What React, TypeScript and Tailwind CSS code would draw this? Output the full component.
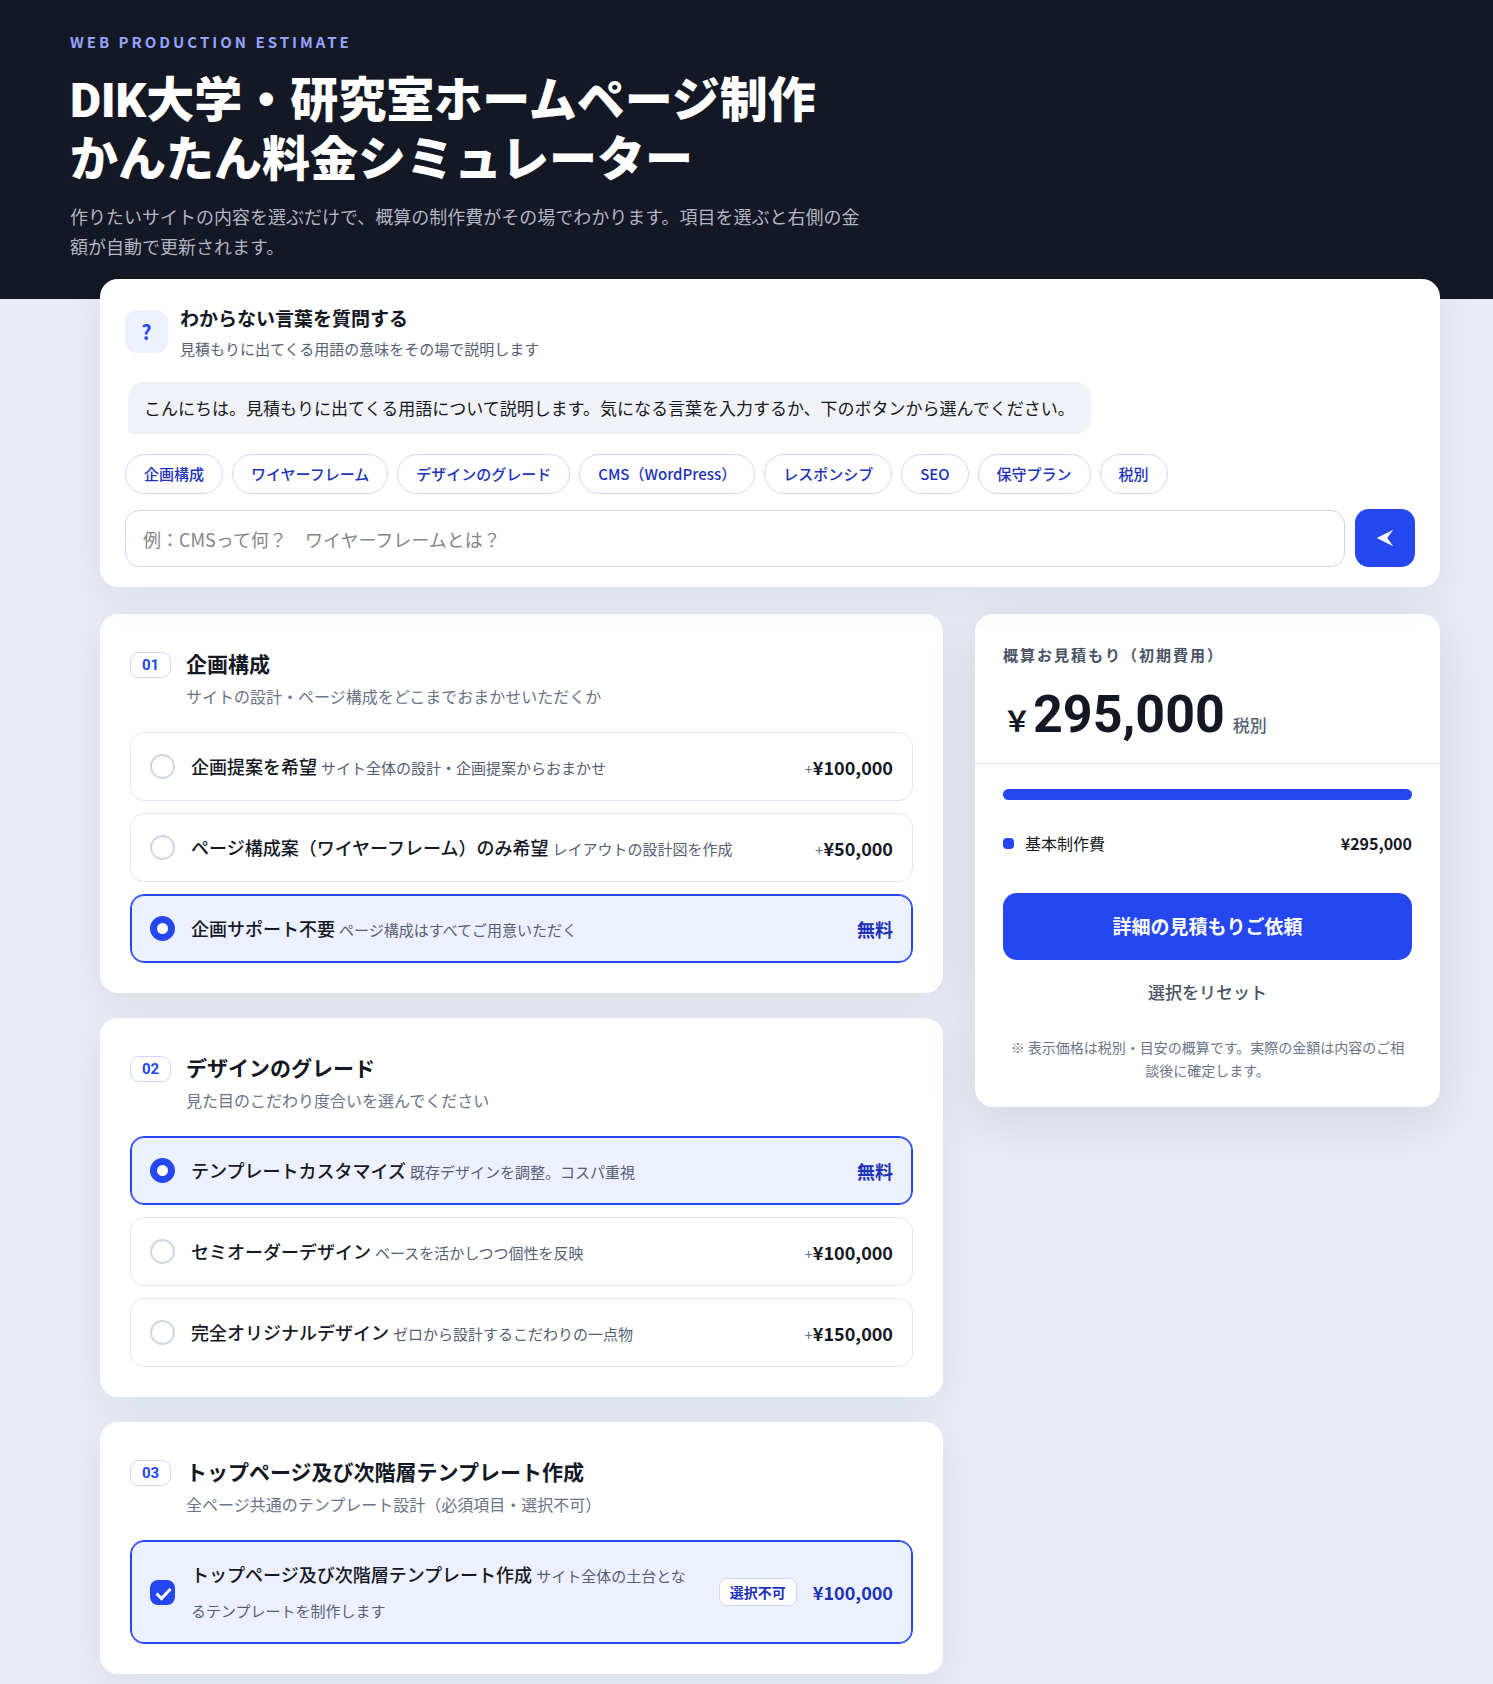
import React, { useState } from "react";

type Option = {
  id: string;
  label: string;
  desc: string;
  price: number;
};

type Section = {
  no: string;
  title: string;
  desc: string;
  options: Option[];
};

const BASE_PRICE = 295000;

const terms = [
  "企画構成",
  "ワイヤーフレーム",
  "デザインのグレード",
  "CMS（WordPress）",
  "レスポンシブ",
  "SEO",
  "保守プラン",
  "税別",
];

const sections: Section[] = [
  {
    no: "01",
    title: "企画構成",
    desc: "サイトの設計・ページ構成をどこまでおまかせいただくか",
    options: [
      { id: "plan-full", label: "企画提案を希望", desc: "サイト全体の設計・企画提案からおまかせ", price: 100000 },
      { id: "plan-wire", label: "ページ構成案（ワイヤーフレーム）のみ希望", desc: "レイアウトの設計図を作成", price: 50000 },
      { id: "plan-none", label: "企画サポート不要", desc: "ページ構成はすべてご用意いただく", price: 0 },
    ],
  },
  {
    no: "02",
    title: "デザインのグレード",
    desc: "見た目のこだわり度合いを選んでください",
    options: [
      { id: "design-template", label: "テンプレートカスタマイズ", desc: "既存デザインを調整。コスパ重視", price: 0 },
      { id: "design-semi", label: "セミオーダーデザイン", desc: "ベースを活かしつつ個性を反映", price: 100000 },
      { id: "design-full", label: "完全オリジナルデザイン", desc: "ゼロから設計するこだわりの一点物", price: 150000 },
    ],
  },
];

const defaults: Record<string, string> = { "01": "plan-none", "02": "design-template" };

const yen = (n: number) => "¥" + n.toLocaleString("en-US");

function SectionCard({ no, title, desc, children }: { no: string; title: string; desc: string; children: React.ReactNode }) {
  return (
    <section className="rounded-[18px] bg-white px-[30px] pt-[33px] pb-[30px] shadow-[0_10px_40px_rgba(20,24,36,0.07)]">
      <div className="mb-[22px] flex items-start gap-[15px]">
        <span className="mt-[5px] flex h-[26px] w-[41px] shrink-0 items-center justify-center rounded-[9px] border border-[#cdd5fd] font-['Roboto','Noto_Sans_CJK_JP',sans-serif] text-[15px] font-bold text-[#2447f0]">
          {no}
        </span>
        <div>
          <h2 className="text-[21px] leading-8 font-bold">{title}</h2>
          <p className="mt-[3px] text-base leading-7 text-[#6b7488]">{desc}</p>
        </div>
      </div>
      <div className="flex flex-col gap-3">{children}</div>
    </section>
  );
}

function OptionText({ label, desc }: { label: string; desc: string }) {
  return (
    <span className="flex-1 pr-1 text-lg leading-[35px] font-medium">
      {label} <small className="text-[15px] leading-none font-normal text-[#566073]">{desc}</small>
    </span>
  );
}

const rowBase = "flex cursor-pointer items-center gap-4 rounded-[14px] border px-[19px] py-4";
const rowOn = "border-[#2447f0] bg-[#edf0ff] shadow-[inset_0_0_0_1px_#2447f0]";
const rowOff = "border-[#e3e7f1] bg-white";

export default function App() {
  const [picked, setPicked] = useState(defaults);
  const [question, setQuestion] = useState("");

  const extras = sections
    .map((s) => s.options.find((o) => o.id === picked[s.no])!)
    .filter((o) => o.price > 0);
  const total = extras.reduce((sum, o) => sum + o.price, BASE_PRICE);

  return (
    <div className="min-h-screen bg-[#eaedf6] font-['Noto_Sans_CJK_JP',sans-serif] text-[#141824]">
      <header className="bg-[#141824] px-[70px] pt-[30px] pb-[38px]">
        <p className="text-[15px] leading-6 font-bold tracking-[3px] text-[#96a4ff]">WEB PRODUCTION ESTIMATE</p>
        <h1 className="mt-[17px] font-['Roboto','Noto_Sans_CJK_JP',sans-serif] text-5xl leading-[59px] font-black text-white">
          DIK大学・研究室ホームページ制作
          <br />
          かんたん料金シミュレーター
        </h1>
        <p className="mt-3 max-w-[800px] text-lg leading-[30px] text-[#b0b6c6]">
          作りたいサイトの内容を選ぶだけで、概算の制作費がその場でわかります。項目を選ぶと右側の金額が自動で更新されます。
        </p>
      </header>

      <main className="-mt-5 pr-[53px] pb-3 pl-[100px]">
        {/* 用語チャット */}
        <section className="relative rounded-[18px] bg-white px-[25px] pt-[23px] pb-5 shadow-[0_10px_40px_rgba(20,24,36,0.07)]">
          <div className="flex items-start gap-3">
            <span className="mt-2 flex size-[43px] items-center justify-center rounded-xl bg-[#edf0ff] text-xl font-bold text-[#2447f0]">?</span>
            <div>
              <h2 className="text-[19px] leading-8 font-bold">わからない言葉を質問する</h2>
              <p className="text-[15px] leading-[30px] text-[#566073]">見積もりに出てくる用語の意味をその場で説明します</p>
            </div>
          </div>
          <p className="mt-[18px] ml-[3px] w-fit rounded-2xl rounded-bl-sm bg-[#f1f2f8] px-4 py-3 text-[17px] leading-7">
            こんにちは。見積もりに出てくる用語について説明します。気になる言葉を入力するか、下のボタンから選んでください。
          </p>
          <div className="mt-5 flex flex-wrap gap-[9px]">
            {terms.map((term) => (
              <button
                key={term}
                type="button"
                onClick={() => setQuestion(term)}
                className="h-10 rounded-full border border-[#cdd5fd] px-[18px] text-[15px] font-medium text-[#1c32b8]"
              >
                {term}
              </button>
            ))}
          </div>
          <form className="mt-[15px] flex items-end gap-[10px]" onSubmit={(e) => e.preventDefault()}>
            <input
              type="text"
              aria-label="質問"
              value={question}
              onChange={(e) => setQuestion(e.target.value)}
              placeholder="例：CMSって何？　ワイヤーフレームとは？"
              className="h-[57px] min-w-0 flex-1 rounded-[14px] border border-[#d0d6e4] px-[17px] text-lg placeholder:text-[#858585]"
            />
            <button
              type="submit"
              aria-label="送信"
              className="flex h-[58px] w-[60px] items-center justify-center rounded-[14px] bg-[#2447f0] text-white"
            >
              <svg viewBox="0 0 18 18" className="size-[18px]" fill="currentColor">
                <path d="M.8 9 17.200 .8 11.300 9 17.200 17.200Z" />
              </svg>
            </button>
          </form>
        </section>

        <div className="mt-[27px] grid grid-cols-[minmax(0,1fr)_465px] items-start gap-8">
          <div className="flex flex-col gap-[25px]">
            {sections.map((s) => (
              <SectionCard key={s.no} no={s.no} title={s.title} desc={s.desc}>
                {s.options.map((o) => {
                  const on = picked[s.no] === o.id;
                  return (
                    <label key={o.id} className={`${rowBase} ${on ? rowOn : rowOff}`}>
                      <input
                        type="radio"
                        name={`section-${s.no}`}
                        checked={on}
                        onChange={() => setPicked({ ...picked, [s.no]: o.id })}
                        className="size-[25px] shrink-0 appearance-none rounded-full border-2 border-[#d0d6e4] bg-white checked:border-[7px] checked:border-[#2447f0]"
                      />
                      <OptionText label={o.label} desc={o.desc} />
                      {o.price > 0 ? (
                        <span className="text-lg font-bold">
                          <span className="text-[15px] font-normal text-[#6b7488]">+</span>
                          {yen(o.price)}
                        </span>
                      ) : (
                        <span className="text-lg font-bold text-[#1c32b8]">無料</span>
                      )}
                    </label>
                  );
                })}
              </SectionCard>
            ))}

            <SectionCard no="03" title="トップページ及び次階層テンプレート作成" desc="全ページ共通のテンプレート設計（必須項目・選択不可）">
              <label className={`${rowBase} ${rowOn}`}>
                <span className="relative flex size-[25px] shrink-0">
                  <input
                    type="checkbox"
                    checked
                    readOnly
                    className="size-[25px] appearance-none rounded-lg bg-[#2447f0]"
                  />
                  <svg viewBox="0 0 25 25" className="pointer-events-none absolute inset-0 size-[25px]" fill="none" stroke="#fff" strokeWidth="3">
                    <path d="m6.500 13.500 5 5 9-9.500" />
                  </svg>
                </span>
                <OptionText label="トップページ及び次階層テンプレート作成" desc="サイト全体の土台となるテンプレートを制作します" />
                <span className="flex h-7 items-center rounded-lg border border-[#cdd5fd] bg-white px-[10px] text-sm font-bold text-[#1c32b8]">
                  選択不可
                </span>
                <span className="text-lg font-bold text-[#1c32b8]">{yen(100000)}</span>
              </label>
            </SectionCard>
          </div>

          {/* 概算見積もり */}
          <aside className="rounded-[18px] bg-white shadow-[0_14px_50px_rgba(20,24,36,0.12)]">
            <div className="border-b border-[#e3e7f1] px-7 pt-7 pb-[15px]">
              <h2 className="text-[15px] leading-[26px] font-bold tracking-[2px] text-[#4a5366]">概算お見積もり（初期費用）</h2>
              <p className="mt-[14px] flex items-baseline">
                <span className="text-[28px] leading-none font-bold">￥</span>
                <span className="ml-[2px] font-['Roboto','Noto_Sans_CJK_JP',sans-serif] text-[52px] leading-[66px] font-bold">
                  {total.toLocaleString("en-US")}
                </span>
                <span className="ml-2 text-[17px] leading-none font-medium text-[#566073]">税別</span>
              </p>
            </div>
            <div className="px-7 pt-[25px] pb-[25px]">
              <div className="h-[11px] rounded-full bg-[#2447f0]" />
              <ul className="mt-7 flex flex-col gap-2">
                <li className="flex items-center leading-[30px]">
                  <span className="mr-[11px] size-[11px] rounded bg-[#2447f0]" />
                  <span className="flex-1">基本制作費</span>
                  <span className="font-bold">{yen(BASE_PRICE)}</span>
                </li>
                {extras.map((o) => (
                  <li key={o.id} className="flex items-center leading-[30px]">
                    <span className="mr-[11px] size-[11px] rounded bg-[#96a4ff]" />
                    <span className="flex-1">{o.label}</span>
                    <span className="font-bold">{yen(o.price)}</span>
                  </li>
                ))}
              </ul>
              <button type="button" className="mt-[35px] h-[67px] w-full rounded-[14px] bg-[#2447f0] text-[19px] font-bold text-white">
                詳細の見積もりご依頼
              </button>
              <button type="button" onClick={() => setPicked(defaults)} className="mt-3 h-10 w-full text-[17px] font-medium text-[#4a5366]">
                選択をリセット
              </button>
              <p className="mt-6 px-1 text-center text-sm leading-[23px] text-[#6b7488]">
                ※ 表示価格は税別・目安の概算です。実際の金額は内容のご相談後に確定します。
              </p>
            </div>
          </aside>
        </div>
      </main>
    </div>
  );
}
